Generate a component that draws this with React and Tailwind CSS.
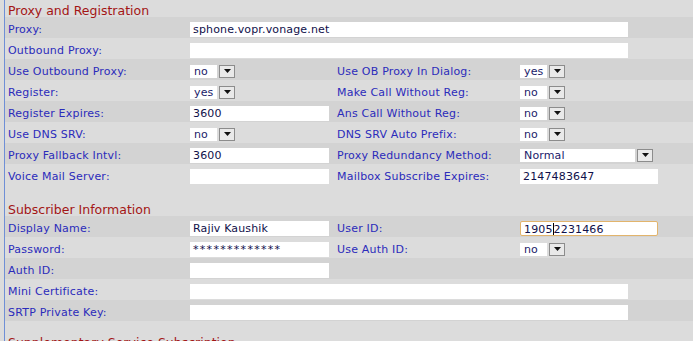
import React from 'react';

const font = { fontFamily: '"DejaVu Sans", Verdana, sans-serif' };

function Row({ dark, children }) {
  return (
    <div
      className={`grid grid-cols-[182px_147px_183px_1fr] items-center h-[21px] pt-[3px] pl-[3px] ${dark ? 'bg-[#d3d3d3]' : 'bg-[#dcdcdc]'}`}
    >
      {children}
    </div>
  );
}

function Label({ children }) {
  return <div className="text-[11px] tracking-[0.2px] text-[#2b2bbb] leading-[13px] whitespace-nowrap">{children}</div>;
}

function Field({ value = '', wide, width = 'w-[139px]', focus, children }) {
  return (
    <div
      className={`${wide ? 'w-[438px]' : width} h-[15px] bg-white pl-[3px] text-[11px] tracking-[0.15px] leading-[15px] text-[#10104a] whitespace-nowrap overflow-hidden ${focus ? 'border border-[#e2b46c] rounded-[2px] leading-[13px] pl-[2px]' : ''}`}
    >
      {children || value}
    </div>
  );
}

function Select({ value, long }) {
  return (
    <div className="flex items-center h-[13px]">
      <div className={`${long ? 'w-[115px]' : 'w-[27px]'} h-[13px] bg-white pl-[4px] text-[11px] tracking-[0.15px] leading-[13px] text-[#1a1a6a]`}>
        {value}
      </div>
      <div className="ml-[2px] w-[16px] h-[13px] border border-[#8c8c8c] bg-[#e9e9e9] flex items-center justify-center">
        <svg width="7" height="4" viewBox="0 0 7 4">
          <path d="M0 0h7L3.5 4z" fill="#111" />
        </svg>
      </div>
    </div>
  );
}

function Header({ children }) {
  return (
    <div className="h-[17px] pt-[4px] pl-[3px] text-[12.5px] leading-[14px] text-[#a31515] whitespace-nowrap">
      {children}
    </div>
  );
}

export default function App() {
  return (
    <div className="w-[693px] h-[341px] overflow-hidden bg-[#dcdcdc]" style={font}>
      <div className="ml-[4px] border-l border-[#6f8fd6] h-full">
        <Header>Proxy and Registration</Header>
        <Row dark>
          <Label>Proxy:</Label>
          <div className="col-span-3"><Field wide value="sphone.vopr.vonage.net" /></div>
        </Row>
        <Row>
          <Label>Outbound Proxy:</Label>
          <div className="col-span-3"><Field wide /></div>
        </Row>
        <Row dark>
          <Label>Use Outbound Proxy:</Label>
          <Select value="no" />
          <Label>Use OB Proxy In Dialog:</Label>
          <Select value="yes" />
        </Row>
        <Row>
          <Label>Register:</Label>
          <Select value="yes" />
          <Label>Make Call Without Reg:</Label>
          <Select value="no" />
        </Row>
        <Row dark>
          <Label>Register Expires:</Label>
          <Field value="3600" />
          <Label>Ans Call Without Reg:</Label>
          <Select value="no" />
        </Row>
        <Row>
          <Label>Use DNS SRV:</Label>
          <Select value="no" />
          <Label>DNS SRV Auto Prefix:</Label>
          <Select value="no" />
        </Row>
        <Row dark>
          <Label>Proxy Fallback Intvl:</Label>
          <Field value="3600" />
          <Label>Proxy Redundancy Method:</Label>
          <Select long value="Normal" />
        </Row>
        <Row>
          <Label>Voice Mail Server:</Label>
          <Field />
          <Label>Mailbox Subscribe Expires:</Label>
          <Field width="w-[138px]" value="2147483647" />
        </Row>

        <div className="h-[14px]" />
        <Header>Subscriber Information</Header>
        <Row dark>
          <Label>Display Name:</Label>
          <Field value="Rajiv Kaushik" />
          <Label>User ID:</Label>
          <Field width="w-[138px]" focus>
            1905<span className="inline-block w-px h-[12px] bg-black align-[-2px]" />2231466
          </Field>
        </Row>
        <Row>
          <Label>Password:</Label>
          <Field>
            <span className="tracking-[1.3px]">*************</span>
          </Field>
          <Label>Use Auth ID:</Label>
          <Select value="no" />
        </Row>
        <Row dark>
          <Label>Auth ID:</Label>
          <Field />
        </Row>
        <Row>
          <Label>Mini Certificate:</Label>
          <div className="col-span-3"><Field wide /></div>
        </Row>
        <Row dark>
          <Label>SRTP Private Key:</Label>
          <div className="col-span-3"><Field wide /></div>
        </Row>

        <div className="h-[11px]" />
        <Header>Supplementary Service Subscription</Header>
      </div>
    </div>
  );
}
